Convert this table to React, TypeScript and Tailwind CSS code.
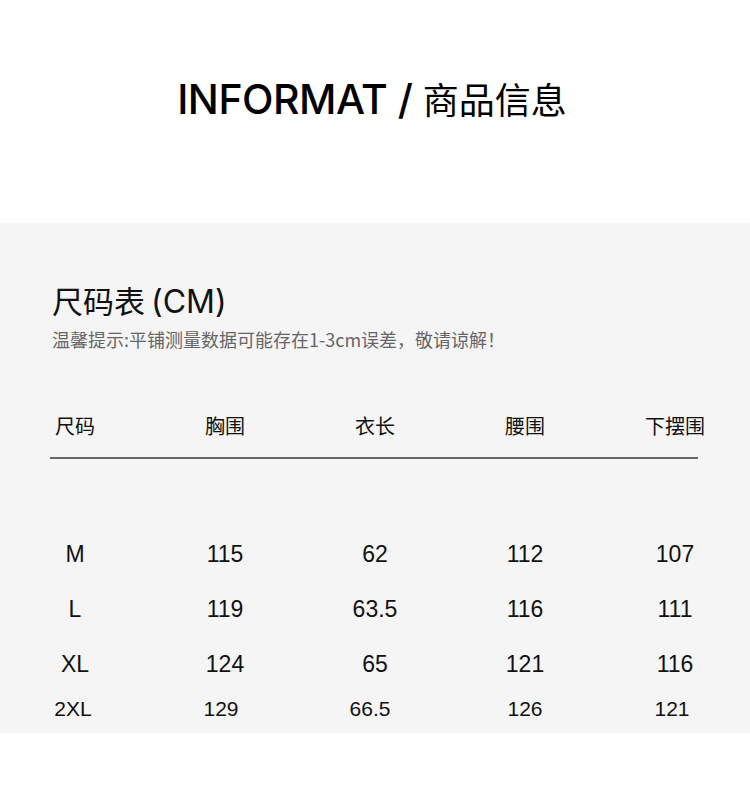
const HEADERS = ["尺码", "胸围", "衣长", "腰围", "下摆围"]

const ROWS = [
  ["M", "115", "62", "112", "107"],
  ["L", "119", "63.5", "116", "111"],
  ["XL", "124", "65", "121", "116"],
]

const LAST_ROW = ["2XL", "129", "66.5", "126", "121"]
const LAST_SHIFT = ["pr-[4px]", "pr-[8px]", "pr-[10px]", "pl-[0px]", "pr-[6px]"]

const cjk = "font-['Noto_Sans_CJK_SC',sans-serif]"
const nums = "font-['Liberation_Sans','Noto_Sans_CJK_SC',sans-serif]"

export default function App() {
  return (
    <div className="w-[750px] h-[797px] bg-white overflow-hidden">
      <div className="h-[223px] pt-[75px] flex justify-center pr-[6px]">
        <h1 className="h-[46px] leading-[46px] text-[41px] text-black tracking-[-0.5px] font-medium font-['Inter','Noto_Sans_CJK_SC',sans-serif]">
          INFORMAT /{" "}
          <span className={`text-[36px] tracking-[0px] font-normal ${cjk}`}>商品信息</span>
        </h1>
      </div>

      <div className="h-[510px] bg-[#f5f5f5] pt-[59px]">
        <div className="pl-[52px]">
          <h2 className={`h-[36px] leading-[36px] text-[31px] text-[#111] ${cjk}`}>
            尺码表
            <span className="font-['Inter',sans-serif] text-[32px] ml-[6px]">(CM)</span>
          </h2>
          <p className={`mt-[9px] h-[24px] leading-[24px] text-[18px] text-[#666] ${cjk}`}>
            温馨提示:平铺测量数据可能存在1-3cm误差，敬请谅解！
          </p>
        </div>

        <div className={`mt-[59px] grid grid-cols-5 h-[32px] items-center text-[20px] text-[#111] ${cjk}`}>
          {HEADERS.map((h) => (
            <div key={h} className="text-center leading-[32px]">
              {h}
            </div>
          ))}
        </div>

        <div className="mt-[15px] ml-[50px] w-[648px] h-[2px] bg-[#666]" />

        <div className={`mt-[68px] text-[23px] text-[#111] ${nums}`}>
          {ROWS.map((row) => (
            <div key={row[0]} className="grid grid-cols-5 h-[55px] items-center">
              {row.map((c, i) => (
                <div key={i} className="text-center">
                  {c}
                </div>
              ))}
            </div>
          ))}
          <div className="grid grid-cols-5 h-[33px] items-center text-[21px]">
            {LAST_ROW.map((c, i) => (
              <div key={i} className={`text-center ${LAST_SHIFT[i]}`}>
                {c}
              </div>
            ))}
          </div>
        </div>
      </div>
    </div>
  )
}
